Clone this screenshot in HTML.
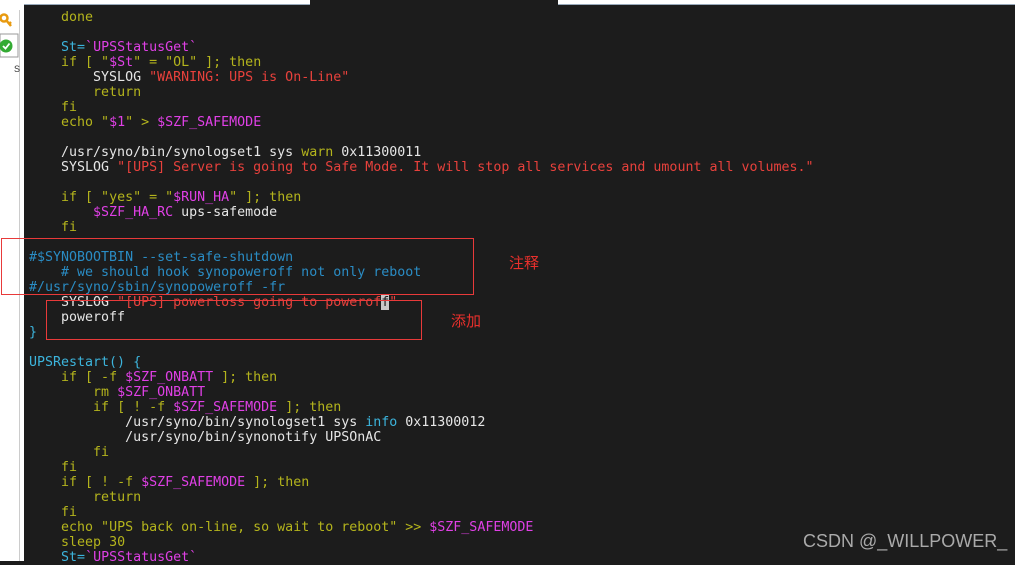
<!DOCTYPE html>
<html><head><meta charset="utf-8"><style>
html,body{margin:0;padding:0;width:1015px;height:561px;overflow:hidden;background:#1c1c1c;}
.left{position:absolute;left:0;top:0;width:24px;height:561px;background:#fff;}
.left .ln{position:absolute;left:19px;top:10px;width:1px;height:551px;background:#ccc;}
.tab1{position:absolute;left:24px;top:0;width:286px;height:4px;background:#fff;border-bottom:1px solid #9ab;}
.tab2{position:absolute;left:558px;top:0;width:457px;height:4px;background:#fff;border-bottom:1px solid #9ab;}
pre{position:absolute;left:29px;top:10px;margin:0;font-family:"DejaVu Sans Mono","Liberation Mono",monospace;font-size:13.3px;line-height:15px;color:#e6e6e6;}
.y{color:#b4b41c}.c{color:#3cb4dc}.m{color:#e040e6}.r{color:#e8413c}.b{color:#2a8cc4}
.cur{background:#c8c8c8;color:#1c1c1c}
.box{position:absolute;border:1px solid #e83a3a;}
.lbl{position:absolute;color:#e8302c;font-family:"Liberation Sans","Noto Sans CJK SC",sans-serif;font-size:15px;}
.wm{position:absolute;left:803px;top:531px;color:#aaa;font-family:"Liberation Sans",sans-serif;font-size:18px;}
</style></head><body>
<div class="left"><div class="ln"></div>
<svg width="24" height="80" style="position:absolute;left:0;top:0">
<circle cx="4" cy="18" r="3.5" fill="none" stroke="#e89a10" stroke-width="2.5"/><path d="M6 20 L11 26 M9 24 L11 22" stroke="#e89a10" stroke-width="2.5"/>
<rect x="0" y="34" width="18" height="23" fill="#fff" stroke="#999"/>
<circle cx="6" cy="46" r="6.5" fill="#3a3"/><path d="M3 46 L5.5 48.5 L9.5 43.5" stroke="#fff" stroke-width="1.8" fill="none"/>
<text x="14" y="72" font-size="9" fill="#333" font-family="Liberation Sans">S</text>
</svg>
</div>
<div class="tab1"></div><div class="tab2"></div>
<pre>    <span class="y">done</span>

    <span class="c">St=</span><span class="m">`UPSStatusGet`</span>
    <span class="y">if [ "</span><span class="m">$St</span><span class="y">" = "OL" ]; then</span>
        SYSLOG <span class="r">"WARNING: UPS is On-Line"</span>
        <span class="y">return</span>
    <span class="y">fi</span>
    <span class="y">echo "</span><span class="m">$1</span><span class="y">" &gt; </span><span class="m">$SZF_SAFEMODE</span>

    /usr/syno/bin/synologset1 sys <span class="y">warn</span> 0x11300011
    SYSLOG <span class="r">"[UPS] Server is going to Safe Mode. It will stop all services and umount all volumes."</span>

    <span class="y">if [ "yes" = "</span><span class="m">$RUN_HA</span><span class="y">" ]; then</span>
        <span class="m">$SZF_HA_RC</span> ups-safemode
    <span class="y">fi</span>

<span class="b">#$SYNOBOOTBIN --set-safe-shutdown</span>
<span class="b">    # we should hook synopoweroff not only reboot</span>
<span class="b">#/usr/syno/sbin/synopoweroff -fr</span>
    SYSLOG <span class="r">"[UPS] powerloss going to powerof</span><span class="cur">f</span><span class="r">"</span>
    poweroff
<span class="c">}</span>

<span class="c">UPSRestart() {</span>
    <span class="y">if [ -f </span><span class="m">$SZF_ONBATT</span><span class="y"> ]; then</span>
        <span class="y">rm </span><span class="m">$SZF_ONBATT</span>
        <span class="y">if [ ! -f </span><span class="m">$SZF_SAFEMODE</span><span class="y"> ]; then</span>
            /usr/syno/bin/synologset1 sys <span class="c">info</span> 0x11300012
            /usr/syno/bin/synonotify UPSOnAC
        <span class="y">fi</span>
    <span class="y">fi</span>
    <span class="y">if [ ! -f </span><span class="m">$SZF_SAFEMODE</span><span class="y"> ]; then</span>
        <span class="y">return</span>
    <span class="y">fi</span>
    <span class="y">echo "UPS back on-line, so wait to reboot" &gt;&gt; </span><span class="m">$SZF_SAFEMODE</span>
    <span class="y">sleep 30</span>
    <span class="c">St=</span><span class="m">`UPSStatusGet`</span></pre>
<div class="box" style="left:1px;top:238px;width:471px;height:55px"></div>
<div class="box" style="left:46px;top:300px;width:374px;height:38px"></div>
<div class="lbl" style="left:509px;top:252px">注释</div>
<div class="lbl" style="left:451px;top:310px">添加</div>
<div class="wm">CSDN @_WILLPOWER_</div>
</body></html>
